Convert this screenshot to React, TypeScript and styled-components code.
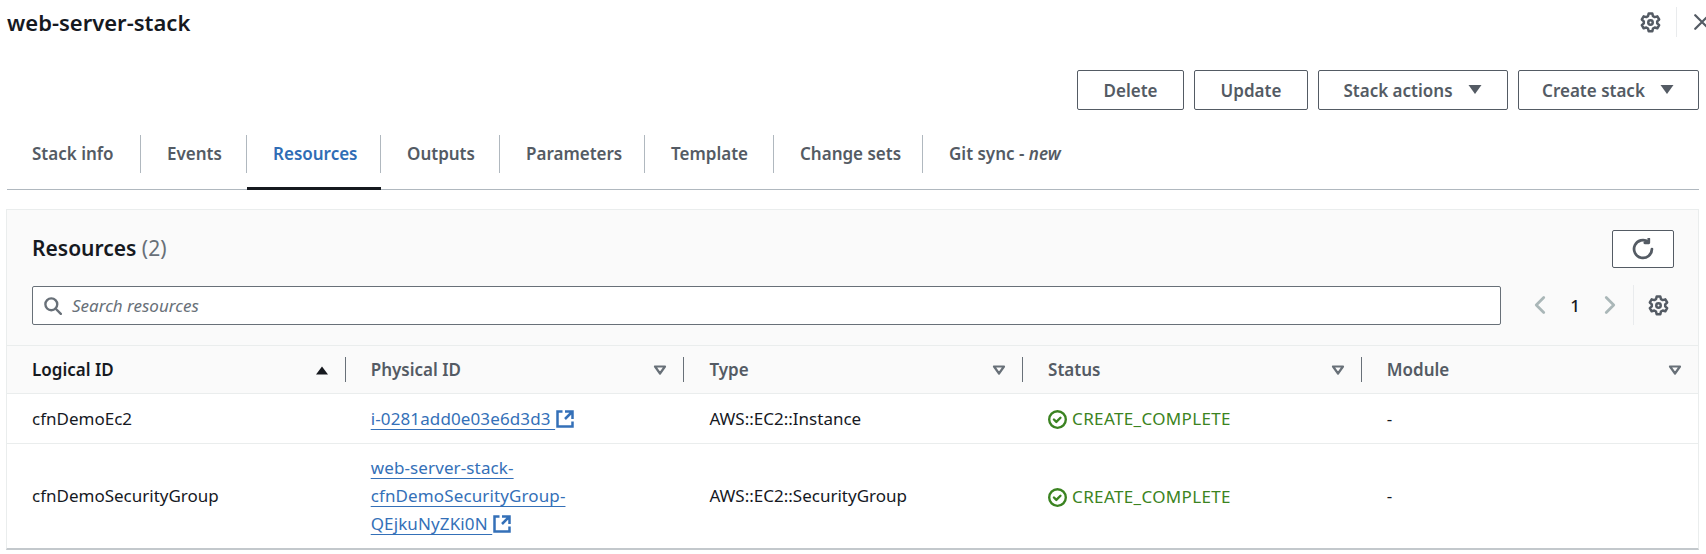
import React from 'react';
import styled, { createGlobalStyle } from 'styled-components';

const GlobalStyle = createGlobalStyle`
  html, body {
    margin: 0;
    background: #fff;
  }
  body {
    font-family: 'Noto Sans', 'Liberation Sans', sans-serif;
    font-size: 17px;
    color: #16191f;
    overflow: hidden;
  }
`;

const Page = styled.div`
  width: 1706px;
  height: 554px;
  padding: 0 7px 0 6px;
  box-sizing: border-box;
  overflow: hidden;
`;

const TitleBar = styled.header`
  display: flex;
  align-items: center;
  justify-content: space-between;
  height: 44px;
  padding-left: 1px;
`;

const Title = styled.h1`
  margin: 0;
  font-size: 22px;
  font-weight: 600;
  color: #16191f;
`;

const PanelTools = styled.div`
  display: flex;
  align-items: center;
  margin-right: -12px;
  color: #545b64;
`;

const ToolDivider = styled.span`
  width: 1px;
  height: 30px;
  background: #e9ebed;
  margin: 0 16px 0 15px;
`;

const Actions = styled.div`
  display: flex;
  justify-content: flex-end;
  gap: 10px;
  margin-top: 26px;
`;

const Button = styled.button<{ $w: number }>`
  display: flex;
  align-items: center;
  justify-content: center;
  gap: 14px;
  height: 40px;
  width: ${p => p.$w}px;
  padding: 0;
  border: 1px solid #545b64;
  border-radius: 2px;
  background: #fff;
  color: #545b64;
  font: 600 17px 'Noto Sans', sans-serif;
`;

const Tabs = styled.nav`
  display: flex;
  margin: 25px 0 0 1px;
  border-bottom: 1px solid #b0b8bf;
`;

const Tab = styled.div<{ $active?: boolean; $w: number }>`
  width: ${p => p.$w}px;
  box-sizing: border-box;
  padding-bottom: 14px;
  margin-bottom: -1px;
  border-bottom: 3px solid ${p => (p.$active ? '#16191f' : 'transparent')};
`;

const TabLabel = styled.div<{ $active?: boolean; $last?: boolean; $first?: boolean }>`
  height: 38px;
  line-height: 38px;
  padding-left: ${p => (p.$first ? '25px' : '26px')};
  font-weight: 600;
  color: ${p => (p.$active ? '#2f6db5' : '#545b64')};
  border-right: ${p => (p.$last ? 'none' : '1px solid #b0b8bf')};

  em {
    font-style: italic;
  }
`;

const Card = styled.section`
  margin-top: 19px;
  background: #fff;
  border: 1px solid #eaeded;
  border-bottom: 2px solid #c3c8cc;
`;

const CardHeader = styled.div`
  background: #fafafa;
  padding: 20px 24px 20px 25px;
  border-bottom: 1px solid #eaeded;
`;

const HeaderTop = styled.div`
  display: flex;
  align-items: flex-start;
  justify-content: space-between;
`;

const CardTitle = styled.h2`
  margin: 4px 0 0;
  font-size: 21px;
  line-height: 28px;
  font-weight: 600;

  span {
    font-weight: 400;
    color: #687078;
  }
`;

const RefreshButton = styled.button`
  display: flex;
  align-items: center;
  justify-content: center;
  width: 62px;
  height: 38px;
  padding: 0;
  border: 1px solid #545b64;
  border-radius: 2px;
  background: #fff;
  color: #545b64;
`;

const FilterRow = styled.div`
  display: flex;
  align-items: center;
  margin-top: 17px;
`;

const SearchBox = styled.div`
  display: flex;
  align-items: center;
  gap: 10px;
  width: 1469px;
  height: 39px;
  box-sizing: border-box;
  padding-left: 10px;
  background: #fff;
  border: 1px solid #687078;
  border-radius: 2px;
  color: #687078;
  font-style: italic;
`;

const Pager = styled.div`
  display: flex;
  align-items: center;
  margin-left: 29px;
  height: 40px;
`;

const PageNumber = styled.span`
  width: 50px;
  text-align: center;
  font-weight: 500;
`;

const PagerArrow = styled.span`
  display: flex;
  color: #aab7b8;
`;

const PagerDivider = styled.span`
  width: 1px;
  height: 40px;
  background: #e9ebed;
  margin: 0 14px 0 13px;
`;

const PagerGear = styled.span`
  display: flex;
  color: #545b64;
`;

const Table = styled.table`
  width: 100%;
  border-collapse: collapse;
  table-layout: fixed;
`;

const HeadRow = styled.tr`
  background: #fafafa;
`;

const Th = styled.th<{ $active?: boolean; $last?: boolean }>`
  width: ${p => (p.$last ? 'auto' : '338.7px')};
  padding: 0;
  height: 47px;
  text-align: left;
  border-bottom: 1px solid #eaeded;
  font-weight: 600;
  color: ${p => (p.$active ? '#16191f' : '#545b64')};
`;

const ThInner = styled.div<{ $last?: boolean }>`
  display: flex;
  align-items: center;
  justify-content: space-between;
  height: 25px;
  padding: 0 15px 0 25px;
  border-right: ${p => (p.$last ? 'none' : '1px solid #687078')};
`;

const Row = styled.tr`
  border-bottom: 1px solid #eaeded;

  &:last-child {
    border-bottom: none;
  }
`;

const Td = styled.td`
  padding: 10px 30px 10px 25px;
  line-height: 28px;
  color: #16191f;
`;

const ResourceLink = styled.a`
  color: #3470b8;
  text-decoration: underline;
  text-decoration-thickness: 1px;
  text-underline-offset: 4px;
  letter-spacing: 0.12px;

  svg {
    display: inline-block;
    vertical-align: -4px;
    margin-top: -4px;
  }
`;

const Status = styled.span`
  display: inline-flex;
  align-items: center;
  vertical-align: middle;
  gap: 5px;
  color: #3b8321;
  letter-spacing: 0.35px;
`;

const Icon = ({
  size = 18,
  width = 2,
  children
}: {
  size?: number;
  width?: number;
  children: React.ReactNode;
}) => (
  <svg
    width={size}
    height={size}
    viewBox="0 0 16 16"
    fill="none"
    stroke="currentColor"
    strokeWidth={width}
    strokeLinecap="round"
    strokeLinejoin="round"
    style={{ flexShrink: 0 }}
  >
    {children}
  </svg>
);

const GearIcon = () => (
  <Icon size={21} width={1.9}>
    <circle cx="8" cy="8" r="1.7" />
    <path d="M6.6 1.2h2.8l.5 2 1.3.7 2-.6 1.4 2.4-1.5 1.4v1.5l1.5 1.4-1.4 2.4-2-.6-1.3.8-.5 2H6.6l-.5-2-1.3-.8-2 .6-1.4-2.4 1.5-1.4V7.1L1.4 5.7l1.4-2.4 2 .6 1.3-.7z" />
  </Icon>
);

const CaretDown = () => (
  <svg width="16" height="16" viewBox="0 0 16 16" style={{ flexShrink: 0 }}>
    <path d="M1.5 3h13L8 12z" fill="currentColor" />
  </svg>
);

const SortCaret = ({ up }: { up?: boolean }) =>
  up ? (
    <svg width="16" height="16" viewBox="0 0 16 16" style={{ color: '#16191f', flexShrink: 0 }}>
      <path d="M2 12.5h12L8 4.5z" fill="currentColor" />
    </svg>
  ) : (
    <svg width="16" height="16" viewBox="0 0 16 16" style={{ color: '#687078', flexShrink: 0 }}>
      <path d="M3 4.5h10l-5 7z" fill="none" stroke="currentColor" strokeWidth="2.2" strokeLinejoin="round" />
    </svg>
  );

const ExternalIcon = () => (
  <Icon size={20}>
    <path d="M14 8V2H8M14 2 8 8M6 2H2v12h12v-4" strokeLinecap="butt" strokeLinejoin="miter" />
  </Icon>
);

const StatusIcon = () => (
  <Icon size={19}>
    <circle cx="8" cy="8" r="7" />
    <path d="m5 8 2 2 3.5-3.5" />
  </Icon>
);

const tabs = [
  { label: 'Stack info', w: 134 },
  { label: 'Events', w: 106 },
  { label: 'Resources', w: 134, active: true },
  { label: 'Outputs', w: 119 },
  { label: 'Parameters', w: 145 },
  { label: 'Template', w: 129 },
  { label: 'Change sets', w: 149 }
];

const columns = ['Logical ID', 'Physical ID', 'Type', 'Status', 'Module'];

const App = () => (
  <Page>
    <GlobalStyle />
    <TitleBar>
      <Title>web-server-stack</Title>
      <PanelTools>
        <GearIcon />
        <ToolDivider />
        <Icon size={18}>
          <path d="m2 2 12 12M14 2 2 14" />
        </Icon>
      </PanelTools>
    </TitleBar>

    <Actions>
      <Button $w={107}>Delete</Button>
      <Button $w={114}>Update</Button>
      <Button $w={190}>
        Stack actions <CaretDown />
      </Button>
      <Button $w={181}>
        Create stack <CaretDown />
      </Button>
    </Actions>

    <Tabs>
      {tabs.map((t, i) => (
        <Tab key={t.label} $active={t.active} $w={t.w}>
          <TabLabel $active={t.active} $first={i === 0}>
            {t.label}
          </TabLabel>
        </Tab>
      ))}
      <Tab $w={200}>
        <TabLabel $last>
          Git sync - <em>new</em>
        </TabLabel>
      </Tab>
    </Tabs>

    <Card>
      <CardHeader>
        <HeaderTop>
          <CardTitle>
            Resources <span>(2)</span>
          </CardTitle>
          <RefreshButton>
            <Icon size={22}>
              <path d="M14.5 8a6.5 6.5 0 1 1-2.6-5.2" />
              <path d="M12.2 0.6v2.9H9.3" />
            </Icon>
          </RefreshButton>
        </HeaderTop>
        <FilterRow>
          <SearchBox>
            <Icon size={19}>
              <circle cx="7" cy="7" r="5" />
              <path d="m15 15-4.5-4.5" />
            </Icon>
            Search resources
          </SearchBox>
          <Pager>
            <PagerArrow>
              <Icon size={20} width={2.2}>
                <path d="M11 2 5 8l6 6" />
              </Icon>
            </PagerArrow>
            <PageNumber>1</PageNumber>
            <PagerArrow>
              <Icon size={20} width={2.2}>
                <path d="m5 2 6 6-6 6" />
              </Icon>
            </PagerArrow>
            <PagerDivider />
            <PagerGear>
              <GearIcon />
            </PagerGear>
          </Pager>
        </FilterRow>
      </CardHeader>

      <Table>
        <thead>
          <HeadRow>
            {columns.map((c, i) => (
              <Th key={c} $active={i === 0} $last={i === columns.length - 1}>
                <ThInner $last={i === columns.length - 1}>
                  {c}
                  <SortCaret up={i === 0} />
                </ThInner>
              </Th>
            ))}
          </HeadRow>
        </thead>
        <tbody>
          <Row>
            <Td>cfnDemoEc2</Td>
            <Td>
              <ResourceLink href="#">
                i-0281add0e03e6d3d3 <ExternalIcon />
              </ResourceLink>
            </Td>
            <Td>AWS::EC2::Instance</Td>
            <Td>
              <Status>
                <StatusIcon />
                CREATE_COMPLETE
              </Status>
            </Td>
            <Td>-</Td>
          </Row>
          <Row>
            <Td>cfnDemoSecurityGroup</Td>
            <Td>
              <ResourceLink href="#">
                web-server-stack-cfnDemoSecurityGroup-QEjkuNyZKi0N <ExternalIcon />
              </ResourceLink>
            </Td>
            <Td>AWS::EC2::SecurityGroup</Td>
            <Td>
              <Status>
                <StatusIcon />
                CREATE_COMPLETE
              </Status>
            </Td>
            <Td>-</Td>
          </Row>
        </tbody>
      </Table>
    </Card>
  </Page>
);

export default App;
